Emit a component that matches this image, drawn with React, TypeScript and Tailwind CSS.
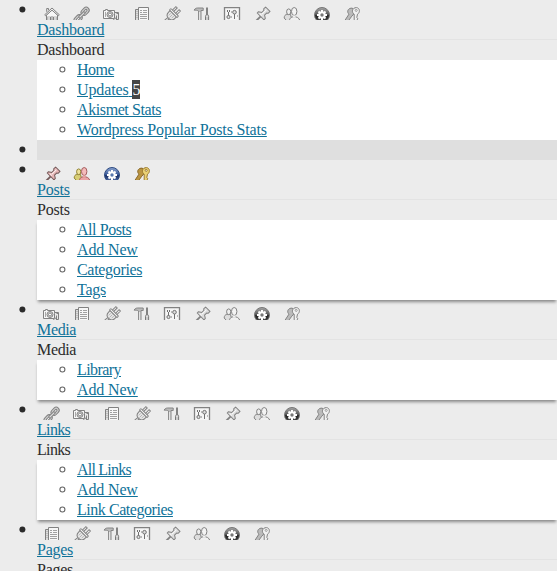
import type { ReactNode } from 'react';

type IconName =
  | 'home' | 'link' | 'media' | 'page' | 'plug' | 'tools'
  | 'settings' | 'pin' | 'users' | 'network' | 'keys';

const ALL: IconName[] = ['home', 'link', 'media', 'page', 'plug', 'tools', 'settings', 'pin', 'users', 'network', 'keys'];

function glyph(name: IconName, color: boolean): ReactNode {
  switch (name) {
    case 'home':
      return (
        <>
          <path d="M2.5 8v8h4v-4h3v4h4V8L8 3z" fill="#f7f7f7" />
          <path d="M.7 7.8 8 1l7.3 6.8-1 .9L8 3.2 1.7 8.7z" fill="#eee" />
          <path d="M2.7 4.8V1.5h1.8v1.7M3 9.5V15M13 9.5V15M6.5 15v-5h3v5" />
          <path d="M5 9v5M11 9v5" stroke="#b5b5b5" />
        </>
      );
    case 'link':
      return (
        <g transform="rotate(-45 8 8)">
          <rect x="-2" y="5" width="9" height="6" rx="3" fill="#cfcfcf" />
          <rect x=".4" y="7.1" width="4.4" height="1.8" rx=".9" fill="#fff" />
          <rect x="8.3" y="4.6" width="9" height="6" rx="3" fill="#cfcfcf" />
          <rect x="10.7" y="6.7" width="4.4" height="1.8" rx=".9" fill="#fff" />
          <rect x="4" y="6.8" width="8" height="2.2" rx="1.1" fill="#ddd" />
        </g>
      );
    case 'media':
      return (
        <>
          <path d="M-.5 3.5h2v-1h2v1h7v8h-11z" fill="#f6f6f6" />
          <circle cx="6" cy="7.5" r="3" fill="#e0e0e0" />
          <circle cx="6" cy="7.5" r="1.5" fill="#fff" />
          <path d="M1.5 5v5" stroke="#aaa" />
          <path d="M10.5 5.5h4v7h-2M12.5 8.5v5H9.8v-2.3h2.7M12.5 6.5h2" fill="#e8e8e8" />
        </>
      );
    case 'page':
      return (
        <>
          <path d="M4.5 2.5h-3v13h3" fill="#ddd" />
          <path d="M4.5.5h10v15h-10z" fill="#f7f7f7" />
          <path d="M6 3.5h2M9 3.5h4M6 5.5h2M9 5.5h4M6 7.5h7M6 9.5h7M6 11.5h7M2.5 4.5h1M2.5 6.5h1M2.5 8.5h1M2.5 10.5h1" stroke="#a0a0a0" />
        </>
      );
    case 'plug':
      return (
        <g transform="rotate(45 8 8)">
          <path d="M8 12.5c0 2-1 3-.2 6" strokeWidth="3" />
          <path d="M8 12c0 2-1 3-.2 6" stroke="#e5e5e5" />
          <path d="M4.8 5V-.7h1.9V5zM9.3 5V-.7h1.9V5z" fill="#f8f8f8" />
          <path d="M3.5 6h9v2.3c0 2.6-1.6 4.5-4.5 4.5S3.5 10.900 3.500 8.300z" fill="#e6e6e6" />
          <rect x="2.600" y="4.200" width="10.800" height="2.100" rx=".7" fill="#f6f6f6" />
          <path d="M6 7.500v3M8 7.500v4M10 7.500v3" stroke="#aaa" strokeWidth=".8" />
        </g>
      );
    case 'tools':
      return (
        <>
          <path d="M0 3.100C1.500.7 3.400 1 5 1h4.200v2.500H7V16H4.600V4C3 3 1.500 3.300 0 3.100z" fill="#bbb" stroke="#858585" />
          <path d="M5.700 5v9" stroke="#eee" />
          <path d="M13 .5v8" strokeWidth="2" />
          <path d="M11.500 16V9.300l.9-1.800h1.300l.9 1.800V16z" fill="#ddd" stroke="#777" />
          <path d="M13 10v6" stroke="#aaa" strokeWidth=".7" />
        </>
      );
    case 'settings':
      return (
        <>
          <path d="M.5.6h15v15H.5z" fill="#f6f6f6" strokeWidth="1.300" />
          <path d="M3.500 3v2M5.500 3v2M4.500 5v4M10.500 7v5" stroke="#707070" />
          <circle cx="4.500" cy="10" r="1.600" fill="#ddd" stroke="#707070" />
          <circle cx="10.500" cy="5.200" r="1.800" fill="#ddd" stroke="#707070" />
          <path d="M7.500 4v2M7.500 9v2M13.500 8v2" stroke="#bbb" />
        </>
      );
    case 'pin':
      return (
        <g transform="rotate(45 8 8)">
          <path d="M8 9.500v7.300" strokeWidth="1.900" />
          <path
            d="M4.900-.2h6.200v2.700L9.900 3.400v2.900l2.900 1.800v1.900H3.200V8.100l2.900-1.800V3.400L4.900 2.500z"
            fill={color ? '#e5b5b5' : '#dcdcdc'}
            strokeLinejoin="round"
          />
          <path d="M7.300 1v6.500M5.300 8.600h3" stroke={color ? '#fff0f0' : '#fafafa'} />
        </g>
      );
    case 'users':
      return (
        <>
          <path d="M.2 11c0-2.200 1.100-3.300 2.500-3.500h3.800l1 4-1 2H2.500z" fill={color ? '#d7cd75' : '#ddd'} stroke={color ? '#918333' : undefined} />
          <ellipse cx="4.700" cy="4.800" rx="2.100" ry="2.900" fill={color ? '#eee19a' : '#eee'} stroke={color ? '#918333' : undefined} />
          <path d="M5.200 16c0-4.400 1.200-5.600 3.800-6.200h2.600c2.800.6 4.500 2.200 4.500 6.200z" fill={color ? '#eba4a4' : '#f1f1f1'} stroke={color ? '#a45e5e' : undefined} />
          <ellipse cx="10.200" cy="4.500" rx="2.700" ry="4" fill={color ? '#f4bbbb' : '#f4f4f4'} stroke={color ? '#a45e5e' : undefined} />
          <path d="M9 8.500v2h2.500v-2" fill={color ? '#eba4a4' : '#f1f1f1'} stroke="none" />
        </>
      );
    case 'network':
      return (
        <>
          <defs>
            <linearGradient id={color ? 'gear-blue' : 'gear-gray'} x1="0" y1="0" x2="0" y2="1">
              <stop offset="0" stopColor={color ? '#8ca5d0' : '#aaa'} />
              <stop offset=".48" stopColor={color ? '#3b5998' : '#555'} />
              <stop offset=".55" stopColor={color ? '#172e65' : '#222'} />
              <stop offset="1" stopColor={color ? '#617eb8' : '#555'} />
            </linearGradient>
          </defs>
          <circle cx="8" cy="8" r="7.500" fill={color ? 'url(#gear-blue)' : 'url(#gear-gray)'} stroke={color ? '#304c83' : '#777'} />
          <path d="M8 3v10M3 8h10M4.500 4.500l7 7M11.500 4.500l-7 7" stroke="#fff" strokeWidth="2" />
          <circle cx="8" cy="8" r="3.700" fill="#fff" stroke="none" />
          <circle cx="8" cy="8" r="1.700" fill={color ? '#5878ae' : '#777'} stroke="none" />
        </>
      );
    case 'keys':
      return (
        <>
          <path
            d="M5.800 1.500c-2.400 1-2.800 4-.8 5.600L.5 14v2h2.300l5-6.800 2-2.200V2.500C8.800 1 7.500.8 5.800 1.500z"
            fill={color ? '#ba9440' : '#bbb'} stroke={color ? '#8a692b' : undefined}
          />
          <path
            d="M12.400.6c-4.200 0-5.300 4.700-2.200 6.600V16h2.500l1.100-1.500-1-1.300 1-1.400-1-1.400.7-3.200C16.300 5.600 16 .8 12.400.6z"
            fill={color ? '#ead174' : '#f1f1f1'} stroke={color ? '#9a7930' : undefined}
          />
          <circle cx="12.200" cy="3.400" r="1" fill="#fff" stroke={color ? '#9a7930' : '#999'} />
        </>
      );
  }
}

function Icon({ name, color = false }: { name: IconName; color?: boolean }) {
  return (
    <span className="flex w-[30px] shrink-0 justify-center">
      <svg width="16" height="16" viewBox="0 0 16 16" fill="none" stroke={color ? '#755b5b' : '#828282'} strokeWidth="1" className="shrink-0 overflow-visible">
        {glyph(name, color)}
      </svg>
    </span>
  );
}

type Item = { label: string; tracking: string; count?: number };

type SectionProps = {
  title: string;
  tracking: string;
  icons: IconName[];
  items?: Item[];
  color?: boolean;
  shadow?: boolean;
};

function Disc() {
  return (
    <svg className="mt-[6px] mr-[11px] ml-[19px] size-[7px] shrink-0" viewBox="0 0 7 7">
      <circle cx="3.400" cy="3.500" r="3" fill="#2b2b2b" />
    </svg>
  );
}

function Ring() {
  return (
    <svg className="mt-[6px] mr-[11px] ml-[22px] size-[7px] shrink-0" viewBox="0 0 7 7">
      <circle cx="3.400" cy="3.500" r="2.500" fill="none" stroke="#666" strokeWidth="1.100" />
    </svg>
  );
}

function Section({ title, tracking, icons, items = [], color = false, shadow = false }: SectionProps) {
  return (
    <li className="flex">
      <Disc />
      <div className="min-w-0 flex-1">
        <div className="flex h-5 overflow-hidden pt-[7px]">
          {icons.map((name) => <Icon key={name} name={name} color={color} />)}
        </div>
        <div className="h-5 border-b border-[#e3e3e3]">
          <a href="#" className={`block h-5 w-fit text-[#0f7299] underline ${tracking} ${color ? 'bg-[#e7e7e7]' : ''}`}>{title}</a>
        </div>
        <div className={`h-5 ${tracking}`}>{title}</div>
        {items.length > 0 && (
          <ul className={`bg-white ${shadow ? 'shadow-[0_3px_3px_-1px_#888]' : ''}`}>
            {items.map((item) => (
              <li key={item.label} className="flex h-5">
                <Ring />
                <a href="#" className={`text-[#0f7299] underline ${item.tracking}`}>
                  {item.label}
                  {item.count !== undefined && <> <span className="inline-block h-[19px] bg-[#464646] align-top leading-5 tracking-normal text-white">{item.count}</span></>}
                </a>
              </li>
            ))}
          </ul>
        )}
      </div>
    </li>
  );
}

export default function App() {
  return (
    <div className="h-[571px] w-[557px] overflow-hidden bg-[#ececec] font-['Liberation_Serif',serif] text-[16px] leading-5 text-[#2b2b2b]">
      <ul>
        <Section
          title="Dashboard"
          tracking="tracking-[-0.22px]"
          icons={ALL}
          items={[
            { label: 'Home', tracking: 'tracking-[-0.5px]' },
            { label: 'Updates', tracking: 'tracking-[-0.12px]', count: 5 },
            { label: 'Akismet Stats', tracking: 'tracking-[-0.4px]' },
            { label: 'Wordpress Popular Posts Stats', tracking: 'tracking-[-0.17px]' },
          ]}
        />
        <li className="flex h-5">
          <Disc />
          <div className="flex-1 bg-[#dfdfdf]" />
        </li>
        <Section
          title="Posts"
          tracking="tracking-[-0.2px]"
          color
          shadow
          icons={['pin', 'users', 'network', 'keys']}
          items={[
            { label: 'All Posts', tracking: 'tracking-[-0.44px]' },
            { label: 'Add New', tracking: 'tracking-[-0.14px]' },
            { label: 'Categories', tracking: 'tracking-[-0.32px]' },
            { label: 'Tags', tracking: 'tracking-[-0.25px]' },
          ]}
        />
        <Section
          title="Media"
          tracking="tracking-[-0.35px]"
          shadow
          icons={ALL.slice(2)}
          items={[
            { label: 'Library', tracking: 'tracking-[-0.57px]' },
            { label: 'Add New', tracking: 'tracking-[-0.14px]' },
          ]}
        />
        <Section
          title="Links"
          tracking="tracking-[-0.65px]"
          shadow
          icons={ALL.slice(1)}
          items={[
            { label: 'All Links', tracking: 'tracking-[-0.77px]' },
            { label: 'Add New', tracking: 'tracking-[-0.14px]' },
            { label: 'Link Categories', tracking: 'tracking-[-0.45px]' },
          ]}
        />
        <Section title="Pages" tracking="tracking-[-0.25px]" icons={ALL.slice(3)} />
      </ul>
    </div>
  );
}
